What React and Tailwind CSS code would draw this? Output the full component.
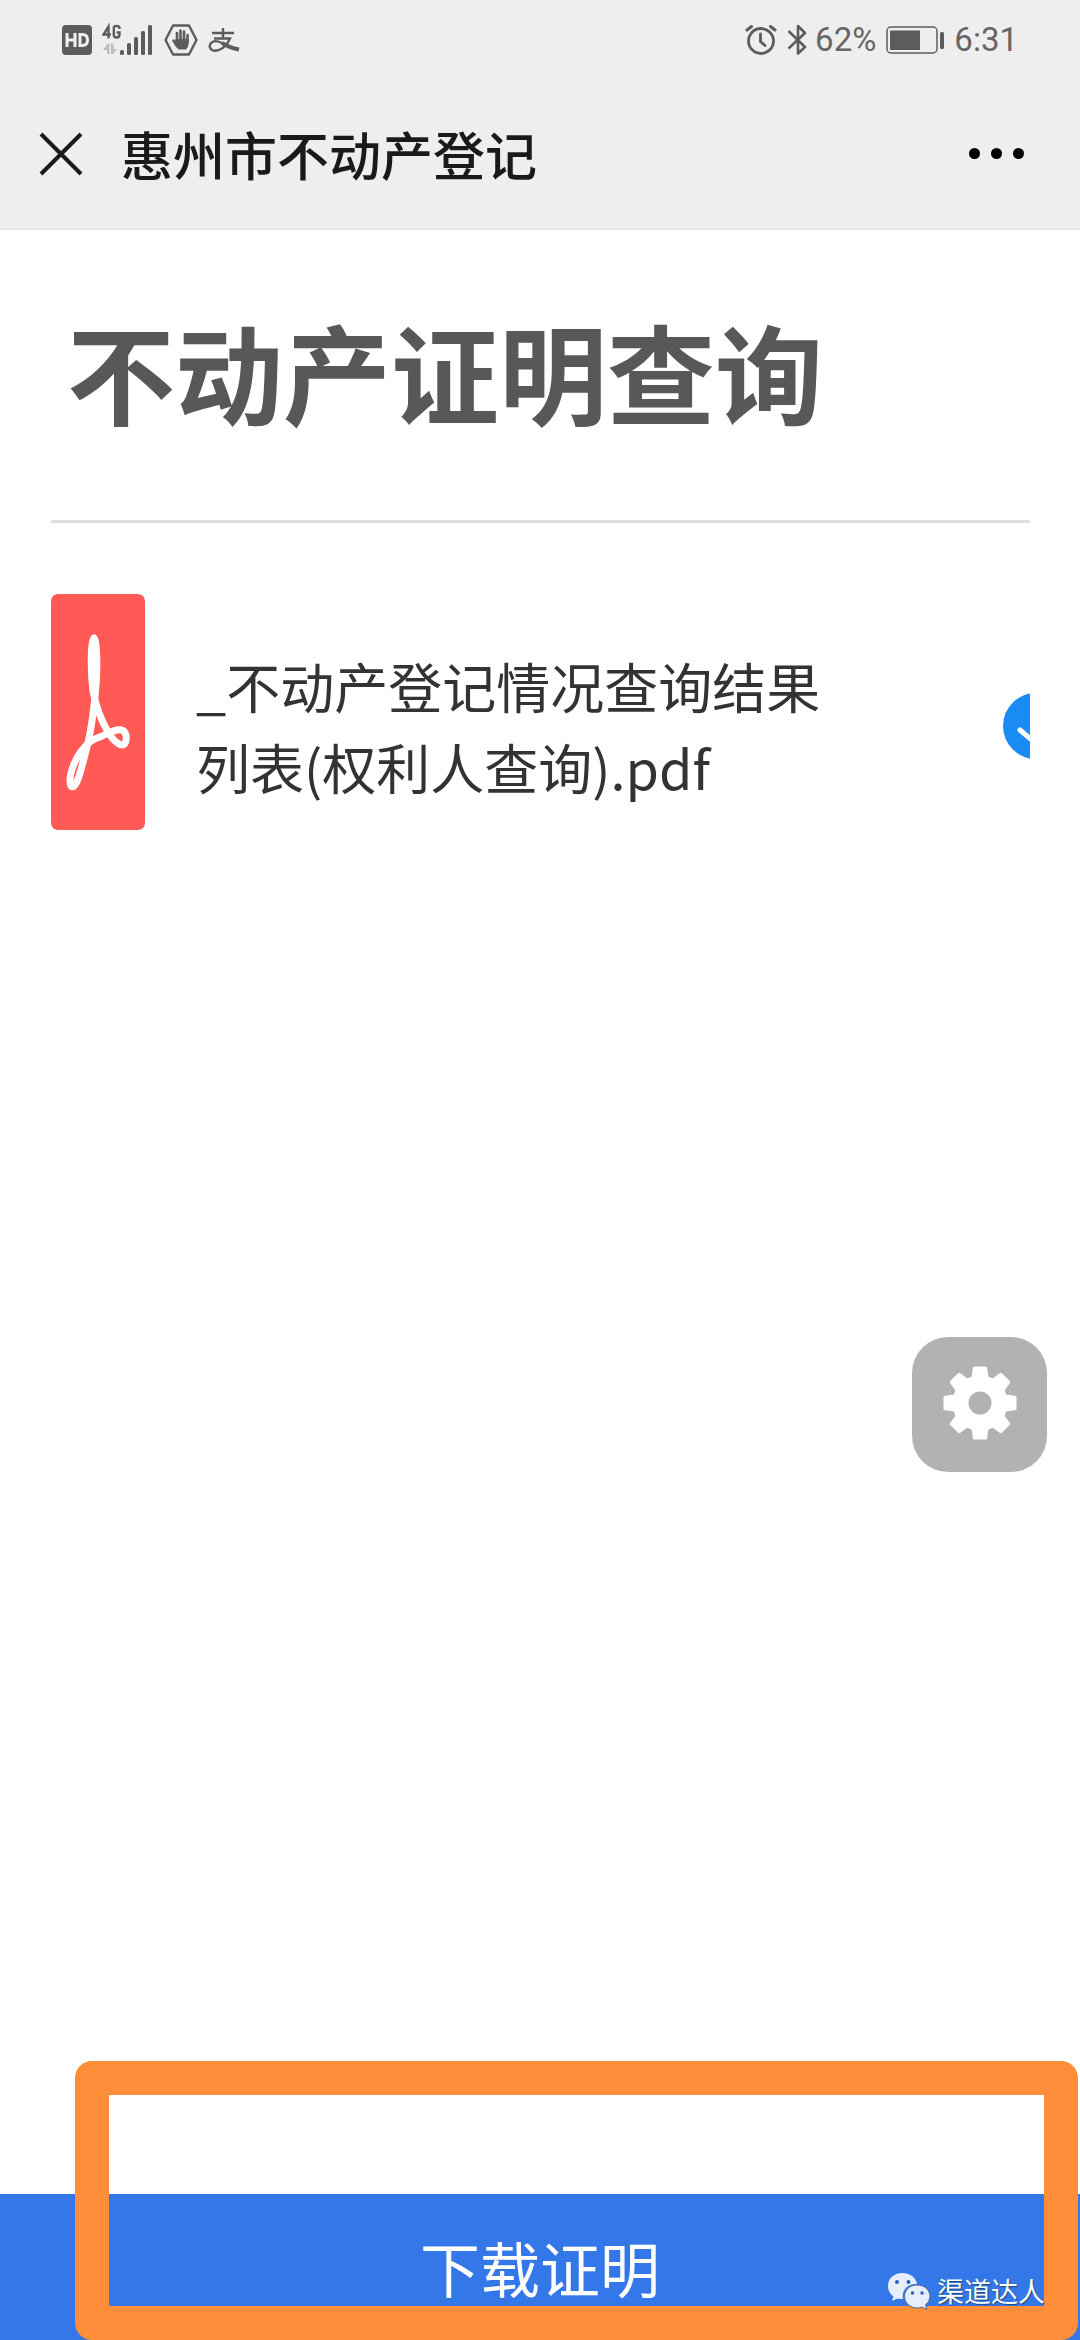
import React from "react";

function HdIcon() {
  return (
    <svg width="30" height="30" viewBox="0 0 30 30" aria-hidden="true" className="shrink-0">
      <rect x="0" y="0" width="30" height="30" rx="4" fill="#5c5c5c" />
      <path
        d="M5 8V22M13 8V22M5 15H13M18 9.500V20.500H20.500C24 20.500 25.500 18.500 25.500 15S24 9.500 20.500 9.500Z"
        fill="none"
        stroke="#eee"
        strokeWidth="3"
      />
    </svg>
  );
}

function SignalIcon() {
  return (
    <svg width="52" height="34" viewBox="0 0 52 34" aria-hidden="true" className="shrink-0">
      <g fill="#5c5c5c">
        <rect x="18" y="27" width="4" height="5" rx="1.500" />
        <rect x="25" y="20" width="4" height="12" rx="1.500" />
        <rect x="32" y="14" width="4" height="18" rx="1.500" />
        <rect x="39" y="8" width="4" height="24" rx="1.500" />
        <rect x="46" y="2" width="4" height="30" rx="1.500" />
      </g>
      <g fill="none" stroke="#5c5c5c" strokeWidth="2.400">
        <path d="M6.500 15.500V3.500L1.500 11.500H9" />
        <path d="M17.500 6V5Q17.500 3 14.500 3T11.800 5V12Q11.800 14.500 14.500 14.500T17.500 12V9.500H14.500" />
      </g>
      <g fill="#bdbdbd">
        <path d="M1 27L6 20.500H7.500V31H5V27ZM9 20.500H11.500V26H15L11 31H9Z" />
      </g>
    </svg>
  );
}

function HandIcon() {
  return (
    <svg width="34" height="32" viewBox="0 0 34 32" aria-hidden="true" className="shrink-0">
      <path d="M9 1.500H25L32.500 16L25 30.500H9L1.500 16Z" fill="none" stroke="#5c5c5c" strokeWidth="2.400" strokeLinejoin="round" />
      <g stroke="#5c5c5c" strokeWidth="2.600" strokeLinecap="round" fill="none">
        <path d="M13 16V9M16.500 16V6.500M20 16V7.500M23.500 18V11M9.500 16.500L13 22" />
      </g>
      <path d="M11.800 15H24.800V19Q24.500 23 22 25.500H14.500Q12 23 10 19Z" fill="#5c5c5c" />
    </svg>
  );
}

function PayIcon() {
  return (
    <svg width="32" height="25" viewBox="0 0 32 25" aria-hidden="true" className="shrink-0">
      <g fill="none" stroke="#5c5c5c" strokeWidth="2.400">
        <path d="M4 5H26M15 0V10M6 10.500H22Q19 17 14 20.500Q8 24 4 22Q0 19 3 15Q7 11 15 15.500" />
        <path d="M14 15Q22 20 31 21.500" strokeWidth="4" />
      </g>
    </svg>
  );
}

function AlarmIcon() {
  return (
    <svg width="32" height="32" viewBox="0 0 32 32" aria-hidden="true" className="shrink-0">
      <g fill="none" stroke="#5c5c5c" strokeLinecap="round">
        <circle cx="16" cy="17" r="12.500" strokeWidth="2.800" />
        <path d="M15.500 10V17.500L20 21.500" strokeWidth="2.800" />
        <path d="M2 6L6.500 2.500M30 6L25.500 2.500" strokeWidth="3" />
      </g>
    </svg>
  );
}

function BluetoothIcon() {
  return (
    <svg width="20" height="32" viewBox="0 0 20 32" aria-hidden="true" className="shrink-0">
      <path d="M1.500 7L18 23L11 29.500V2L18 9L1.500 24.500" fill="none" stroke="#5c5c5c" strokeWidth="2.600" strokeLinejoin="round" />
    </svg>
  );
}

function BatteryIcon() {
  return (
    <svg width="58" height="28" viewBox="0 0 58 28" aria-hidden="true" className="shrink-0">
      <rect x="1" y="1" width="50" height="26" rx="4" fill="none" stroke="#5c5c5c" strokeWidth="1.500" />
      <rect x="4" y="4.500" width="30" height="19.500" fill="#5c5c5c" />
      <rect x="54" y="6" width="4" height="17" rx="1.500" fill="#5c5c5c" />
    </svg>
  );
}

function PdfIcon() {
  return (
    <svg viewBox="0 0 94 236" aria-hidden="true" className="h-[236px] w-[94px] shrink-0">
      <rect width="94" height="236" rx="7" fill="#ff5a56" />
      <g fill="none" stroke="#fff" strokeWidth="7" strokeLinejoin="round">
        <path d="M43 44C39.500 48 39.500 78 42 97C45 112 51 128 57 138C63 148 70 153 73.500 150C76 147 76 139 72 136.500C66 133 55 141 46 144C40 146 36 150 32 155C25 163 19 177 19 187C19 195 23.500 195 27 185C31 174 34 160 37 149C41 132 43 113 44.500 97C46.500 78 46.500 48 43 44Z" />
      </g>
    </svg>
  );
}

function GearIcon() {
  const teeth = [0, 45, 90, 135, 180, 225, 270, 315];
  return (
    <svg width="74" height="74" viewBox="-37 -37 74 74" aria-hidden="true">
      <circle r="19.500" fill="none" stroke="#fff" strokeWidth="16" />
      {teeth.map((angle) => (
        <path
          key={angle}
          d="M-11 -24Q-8.500 -25 -8.200 -27L-7.200 -35Q-7 -36.500 -5.500 -36.500H5.500Q7 -36.500 7.200 -35L8.200 -27Q8.500 -25 11 -24Z"
          transform={`rotate(${angle})`}
          fill="#fff"
        />
      ))}
    </svg>
  );
}

function WeChatIcon() {
  return (
    <svg width="44" height="38" viewBox="0 0 44 38" aria-hidden="true" className="shrink-0">
      <path d="M15 1C7 1 1 6.500 1 14C1 18.500 3 22 6.500 24.500L5 29L10.500 26.500Q13 27.300 16 27C14 18 21 11.500 30 12C29 5.500 23 1 15 1Z" fill="#e6eefc" />
      <path d="M30 13C22.500 13 17.500 18 17.500 24.500S23 36 30 36Q32.500 36 35 35L40 37.500L38.500 33Q43 29.500 43 24.500C43 18 37.500 13 30 13Z" fill="#e6eefc" stroke="#51688f" strokeWidth="1" />
      <g fill="#2f5fb8">
        <circle cx="10" cy="10" r="2" />
        <circle cx="21.500" cy="10" r="2" />
        <circle cx="25.500" cy="21" r="1.700" />
        <circle cx="35" cy="21" r="1.700" />
      </g>
    </svg>
  );
}

export default function App() {
  return (
    <div className="relative flex min-h-screen flex-col overflow-hidden bg-white font-['Noto_Sans_CJK_SC',sans-serif]">
      <header className="border-b-2 border-[#e6e6e6] bg-[#eeeeee]">
        <div className="flex h-20 items-center justify-between pr-[62px] pl-[62px] font-[Roboto,sans-serif] text-[33px] leading-10 text-[#666666]">
          <div className="flex items-center gap-[10px]">
            <HdIcon />
            <SignalIcon />
            <HandIcon />
            <PayIcon />
          </div>
          <div className="flex items-center">
            <AlarmIcon />
            <div className="ml-[10px] flex items-center gap-2">
              <BluetoothIcon />
              <span>62%</span>
            </div>
            <div className="ml-[10px] flex items-center gap-[10px]">
              <BatteryIcon />
              <span>6:31</span>
            </div>
          </div>
        </div>
        <div className="flex h-[148px] items-start pr-[56px] pl-[39px]">
          <button type="button" aria-label="关闭" className="mt-[52px]">
            <svg width="44" height="44" viewBox="0 0 44 44" aria-hidden="true">
              <path d="M2 2L42 42M42 2L2 42" stroke="#1a1a1a" strokeWidth="4" />
            </svg>
          </button>
          <h1 className="mt-[38px] ml-[38px] flex-1 text-[52px] leading-[72px] font-medium text-[#1a1a1a]">惠州市不动产登记</h1>
          <button type="button" aria-label="更多" className="mt-[68px] flex gap-[11px]">
            <span className="size-[11px] rounded-full bg-black" />
            <span className="size-[11px] rounded-full bg-black" />
            <span className="size-[11px] rounded-full bg-black" />
          </button>
        </div>
      </header>

      <main className="pr-[50px] pl-[51px]">
        <h2 className="border-b-[3px] border-[#dedede] px-4 pt-[60px] pb-[70px] text-[108px] leading-[160px] font-bold text-[#585858]">不动产证明查询</h2>
        <div className="mt-[71px] flex items-center overflow-hidden">
          <PdfIcon />
          <p className="ml-[51px] w-[640px] shrink-0 pt-7 text-[54px] leading-[81px] text-[#333333]">
            _不动产登记情况查询结果列表(权利人查询).pdf
          </p>
          <div className="mt-7 ml-auto w-[27px] shrink-0 overflow-hidden">
            <svg viewBox="0 0 66 66" role="img" aria-label="已选择" className="size-[66px] max-w-none">
              <circle cx="33" cy="33" r="33" fill="#1a8af5" />
              <path d="M17 37L30 48L50 24" fill="none" stroke="#fff" strokeWidth="5" strokeLinecap="round" strokeLinejoin="round" />
            </svg>
          </div>
        </div>
      </main>

      <button type="button" aria-label="设置" className="absolute top-[1337px] right-[33px] flex size-[135px] items-center justify-center rounded-[36px] bg-[#b2b2b2] pb-1">
        <GearIcon />
      </button>

      <footer className="relative mt-auto">
        <button type="button" className="block h-[146px] w-full bg-[#3377e9] text-center text-[60px] leading-[146px] text-white">下载证明</button>
        <div className="pointer-events-none absolute right-0.5 bottom-0 left-[75px] h-[279px] rounded-[17px] border-[34px] border-[#ff8e3a]" />
        <div className="absolute right-[35px] bottom-[30px] flex items-center gap-1.5 text-[27px] leading-[38px] text-white [text-shadow:1px_1px_1px_#26476f]">
          <WeChatIcon />
          <span>渠道达人</span>
        </div>
      </footer>
    </div>
  );
}
